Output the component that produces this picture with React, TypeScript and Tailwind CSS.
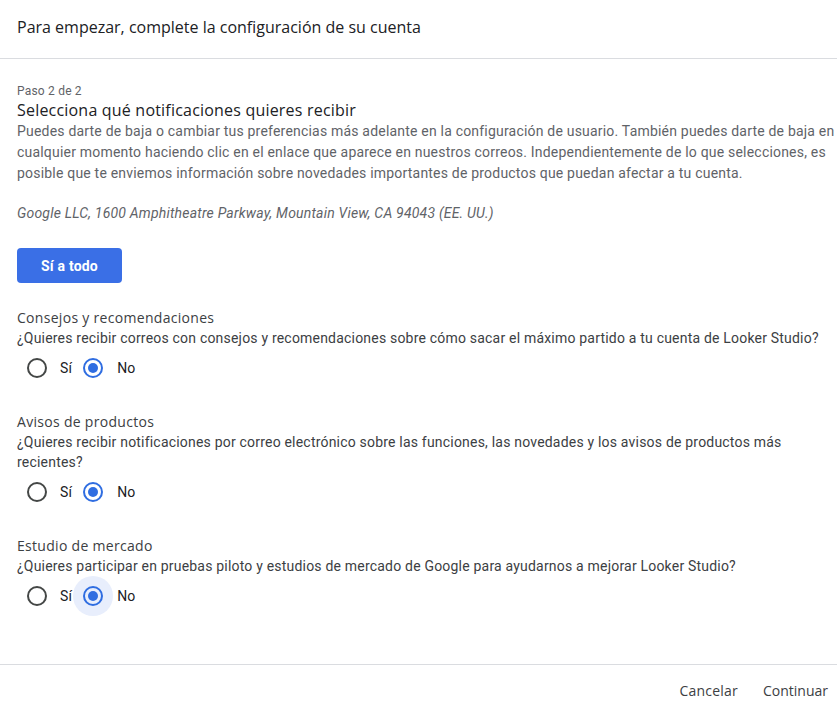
import { useState } from 'react';

const gsans = "font-['Open_Sans',sans-serif]";
const roboto = "font-['Roboto',sans-serif] tracking-[0.2px]";

type Section = {
  id: string;
  title: string;
  question: string;
};

const sections: Section[] = [
  {
    id: 'tips',
    title: 'Consejos y recomendaciones',
    question:
      '¿Quieres recibir correos con consejos y recomendaciones sobre cómo sacar el máximo partido a tu cuenta de Looker Studio?',
  },
  {
    id: 'news',
    title: 'Avisos de productos',
    question:
      '¿Quieres recibir notificaciones por correo electrónico sobre las funciones, las novedades y los avisos de productos más recientes?',
  },
  {
    id: 'research',
    title: 'Estudio de mercado',
    question:
      '¿Quieres participar en pruebas piloto y estudios de mercado de Google para ayudarnos a mejorar Looker Studio?',
  },
];

const Radio = ({ checked, focused, onClick }: { checked: boolean; focused?: boolean; onClick: () => void }) => (
  <button
    type="button"
    onClick={onClick}
    className={`w-10 h-10 rounded-full flex items-center justify-center ${focused ? 'bg-[#e8eefc]' : ''}`}
  >
    <span
      className={`w-5 h-5 rounded-full border-2 flex items-center justify-center ${
        checked ? 'border-[#2f6de1]' : 'border-[#444746]'
      }`}
    >
      {checked && <span className="w-2.5 h-2.5 rounded-full bg-[#2f6de1]" />}
    </span>
  </button>
);

const App = () => {
  const [answers, setAnswers] = useState<Record<string, boolean>>({ tips: false, news: false, research: false });

  return (
    <div className="w-[837px] h-[706px] overflow-hidden bg-white flex flex-col">
      <header className="h-[59px] border-b border-[#dadce0] flex items-center px-[17px] pb-[4px]">
        <h1 className={`${gsans} text-base text-[#202124]`}>Para empezar, complete la configuración de su cuenta</h1>
      </header>

      <main className="flex-1 pl-[17px] pt-[24px]">
        <p className={`${roboto} text-xs leading-4 text-[#5f6368]`}>Paso 2 de 2</p>
        <h2 className={`${gsans} text-base tracking-[0.2px] leading-[22px] text-[#202124]`}>
          Selecciona qué notificaciones quieres recibir
        </h2>
        <p className={`${roboto} text-sm leading-[21px] text-[#5f6368]`}>
          Puedes darte de baja o cambiar tus preferencias más adelante en la configuración de usuario. También puedes darte de
          baja en cualquier momento haciendo clic en el enlace que aparece en nuestros correos. Independientemente de lo que
          selecciones, es posible que te enviemos información sobre novedades importantes de productos que puedan afectar a tu
          cuenta.
        </p>
        <p className={`${roboto} mt-[19px] text-sm leading-5 italic text-[#5f6368]`}>
          Google LLC, 1600 Amphitheatre Parkway, Mountain View, CA 94043 (EE. UU.)
        </p>

        <button
          type="button"
          onClick={() => setAnswers({ tips: true, news: true, research: true })}
          className={`${roboto} mt-[25px] w-[105px] h-[35px] rounded bg-[#3a6fe6] text-white text-sm font-bold`}
        >
          Sí a todo
        </button>

        {sections.map((s, i) => (
          <section key={s.id} className={i === 0 ? 'mt-[25px]' : 'mt-[24px]'}>
            <h3 className={`${gsans} text-sm tracking-[0.3px] leading-5 text-[#3c4043]`}>{s.title}</h3>
            <p className={`${roboto} text-sm leading-5 text-[#3c4043] pr-2`}>{s.question}</p>
            <div className={`${roboto} flex items-center text-sm text-[#202124]`}>
              <Radio checked={answers[s.id]} onClick={() => setAnswers({ ...answers, [s.id]: true })} />
              <span className="ml-[3px] mr-[1px]">Sí</span>
              <Radio
                checked={!answers[s.id]}
                focused={i === 2}
                onClick={() => setAnswers({ ...answers, [s.id]: false })}
              />
              <span className="ml-[4px]">No</span>
            </div>
          </section>
        ))}
      </main>

      <footer className="h-[42px] border-t border-[#dadce0] flex items-start justify-end gap-[9px] pr-[1px] pt-[8px]">
        <button type="button" className={`${gsans} h-9 px-2 text-sm tracking-[0.2px] text-[#3c4043]`}>
          Cancelar
        </button>
        <button type="button" className={`${gsans} h-9 px-2 text-sm text-[#3c4043]`}>
          Continuar
        </button>
      </footer>
    </div>
  );
};

export default App;
